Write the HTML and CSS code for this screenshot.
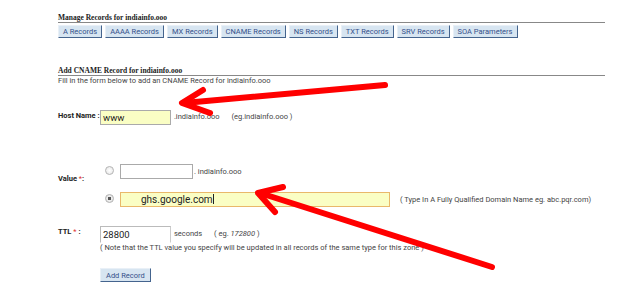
FILE: index.html
```html
<!DOCTYPE html>
<html lang="en">

<head>
    <meta charset="UTF-8">
    <title>Manage Records</title>
    <link rel="stylesheet" href="styles.css">
</head>

<body>
    <div id="pagina">
        <div class="secao">
            <div class="titulo">Manage Records for indiainfo.ooo</div>
            <div id="abas">
                <button class="btn">A Records</button>
                <button class="btn">AAAA Records</button>
                <button class="btn">MX Records</button>
                <button class="btn">CNAME Records</button>
                <button class="btn">NS Records</button>
                <button class="btn">TXT Records</button>
                <button class="btn">SRV Records</button>
                <button class="btn">SOA Parameters</button>
            </div>
        </div>

        <div class="secao secao-form">
            <div class="titulo">Add CNAME Record for indiainfo.ooo</div>
            <div class="descricao">Fill in the form below to add an CNAME Record for indiainfo.ooo</div>

            <table id="formulario">
                <tr class="linha-host">
                    <td class="rotulo">Host Name :</td>
                    <td>
                        <input type="text" class="campo campo-curto amarelo" value="www">
                        <span class="sufixo">.indiainfo.ooo</span>
                        <span class="exemplo">(eg.indiainfo.ooo )</span>
                    </td>
                </tr>
                <tr class="linha-valor">
                    <td class="rotulo">Value <span class="obrigatorio">*</span>:</td>
                    <td>
                        <div class="opcao">
                            <span class="radio"></span>
                            <input type="text" class="campo campo-medio">
                            <span class="sufixo">. indiainfo.ooo</span>
                        </div>
                        <div class="opcao">
                            <span class="radio marcado"></span>
                            <div class="campo campo-longo amarelo foco">ghs.google.com<span class="cursor"></span></div>
                            <span class="dica">( Type In A Fully Qualified Domain Name eg. abc.pqr.com)</span>
                        </div>
                    </td>
                </tr>
                <tr class="linha-ttl">
                    <td class="rotulo">TTL <span class="obrigatorio">*</span> :</td>
                    <td>
                        <input type="text" class="campo campo-ttl" value="28800">
                        <span class="sufixo">seconds</span>
                        <span class="exemplo">( eg. <i>172800</i> )</span>
                        <div class="nota">( Note that the TTL value you specify will be updated in all records of the same type for this zone )</div>
                    </td>
                </tr>
                <tr class="linha-botao">
                    <td></td>
                    <td><button class="btn btn-add">Add Record</button></td>
                </tr>
            </table>
        </div>
    </div>

    <!-- setas vermelhas desenhadas por cima do print -->
    <svg id="setas" width="640" height="297" viewBox="0 0 640 297">
        <g fill="none" stroke="#ff0000" stroke-width="6" stroke-linecap="round" stroke-linejoin="round">
            <path d="M385 85 L184 103" />
            <path d="M203 90 L182 103 L210 113" />
            <path d="M492 267 L260 193" />
            <path d="M283 187 L258 193 L275 212" />
        </g>
    </svg>
</body>

</html>
```

FILE: styles.css
```css
body {
    margin: 0;
    background-color: #fff;
    font-family: Roboto, "Liberation Sans", sans-serif;
    font-size: 7.5px;
    color: #444;
    width: 640px;
    height: 297px;
    overflow: hidden;
    position: relative;
}

#pagina {
    padding: 14px 0 0 58px;
    width: 547px;
}

.titulo {
    font-family: "Liberation Serif", serif;
    font-weight: bold;
    font-size: 7.5px;
    color: #222;
    border-bottom: 1px solid #888;
    line-height: 8px;
}

#abas {
    display: flex;
    gap: 3px;
    margin-top: 2px;
}

.btn {
    font-family: Roboto, "Liberation Sans", sans-serif;
    font-size: 7.5px;
    color: #34508a;
    background-color: #d7e5f1;
    border: 1px solid;
    border-color: #e9f0f7 #44648e #44648e #e9f0f7;
    height: 13px;
    padding: 0 4px;
    line-height: 11px;
    margin: 0;
}

.secao-form {
    margin-top: 29px;
}

.descricao {
    line-height: 10px;
}

#formulario {
    border-collapse: collapse;
    margin-top: 24px;
}

#formulario td {
    padding: 0;
    vertical-align: top;
}

#formulario .rotulo {
    font-weight: bold;
    color: #222;
    width: 42px;
    white-space: nowrap;
}

.obrigatorio {
    color: #e03030;
    font-weight: normal;
}

.campo {
    display: inline-block;
    font-family: Roboto, "Liberation Sans", sans-serif;
    font-size: 9.5px;
    color: #222;
    border: 1px solid #aaa;
    background-color: #fff;
    height: 15px;
    line-height: 13px;
    padding: 0 2px;
    box-sizing: border-box;
    margin: 0;
    vertical-align: middle;
    outline: none;
}

.amarelo {
    background-color: #fafec4;
}

.foco {
    border-color: #e9b86a;
}

.campo-curto {
    width: 71px;
}

.campo-medio {
    width: 73px;
}

.campo-longo {
    width: 270px;
    font-size: 10px;
    padding-left: 20px;
}

.cursor {
    display: inline-block;
    width: 1px;
    height: 10px;
    background-color: #222;
    vertical-align: -1px;
}

.campo-ttl {
    width: 71px;
    height: 17px;
    border-color: #bbb #ccc transparent #bbb;
}

.sufixo {
    margin-left: 1px;
}

.exemplo,
.dica {
    margin-left: 10px;
}

#formulario .linha-host td {
    padding-bottom: 39px;
    line-height: 14px;
}

#formulario .linha-host .rotulo {
    line-height: 12px;
}

.opcao {
    display: flex;
    align-items: center;
    height: 15px;
}

.opcao + .opcao {
    margin-top: 13px;
}

.radio {
    width: 7px;
    height: 7px;
    border: 1px solid #b5b5b5;
    border-radius: 50%;
    background: radial-gradient(circle, #fff 0, #e4e4e4 100%);
    margin: 0 6px 0 5px;
    position: relative;
    top: -1px;
}

.radio.marcado {
    background: radial-gradient(circle, #555 0, #555 1.5px, #eee 2px, #ddd 100%);
}

#formulario .linha-valor td {
    padding-bottom: 19px;
}

#formulario .linha-valor .rotulo {
    vertical-align: middle;
    padding-bottom: 33px;
}

#formulario .linha-ttl .rotulo {
    padding-top: 1px;
}

.nota {
    line-height: 9px;
}

#formulario .linha-botao td {
    padding-top: 16px;
}

.btn-add {
    padding: 0 5px;
    height: 14px;
}

#setas {
    position: absolute;
    top: 0;
    left: 0;
}
```
